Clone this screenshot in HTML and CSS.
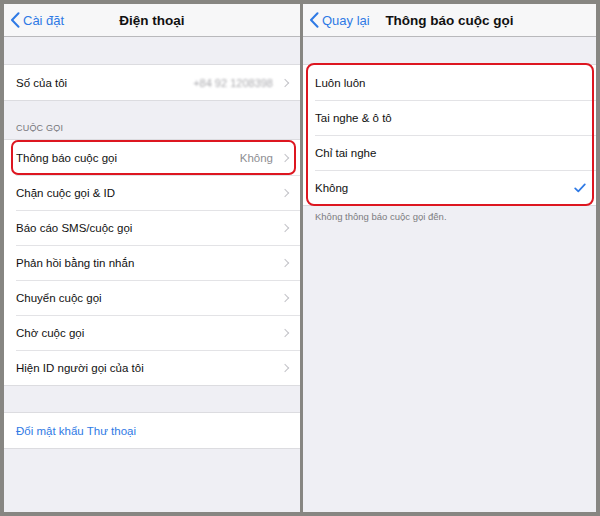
FILE: index.html
```html
<!DOCTYPE html>
<html lang="vi">
<head>
<meta charset="utf-8">
<link rel="stylesheet" href="styles.css">
</head>
<body>
<div class="frame">
  <section class="panel left">
    <header class="nav">
      <span class="back">
        <svg class="back-ico" viewBox="0 0 10 16" width="10" height="16"><path d="M8.5 1.2 L2 8 L8.5 14.8" fill="none" stroke="#2f7ae5" stroke-width="2" stroke-linecap="round" stroke-linejoin="round"/></svg>
        <span>Cài đặt</span>
      </span>
      <h1 class="title">Điện thoại</h1>
    </header>

    <div class="spacer"></div>
    <ul class="group">
      <li class="row"><span class="label">Số của tôi</span><span class="value blur">+84 92 1208398</span><span class="chev"></span></li>
    </ul>

    <div class="section-head">CUỘC GỌI</div>
    <ul class="group">
      <li class="row marked-left"><span class="label">Thông báo cuộc gọi</span><span class="value">Không</span><span class="chev"></span></li>
      <li class="row"><span class="label">Chặn cuộc gọi &amp; ID</span><span class="chev"></span></li>
      <li class="row"><span class="label">Báo cáo SMS/cuộc gọi</span><span class="chev"></span></li>
      <li class="row"><span class="label">Phản hồi bằng tin nhắn</span><span class="chev"></span></li>
      <li class="row"><span class="label">Chuyển cuộc gọi</span><span class="chev"></span></li>
      <li class="row"><span class="label">Chờ cuộc gọi</span><span class="chev"></span></li>
      <li class="row"><span class="label">Hiện ID người gọi của tôi</span><span class="chev"></span></li>
    </ul>

    <div class="spacer"></div>
    <ul class="group">
      <li class="row"><span class="label link">Đổi mật khẩu Thư thoại</span></li>
    </ul>
  </section>

  <section class="panel right">
    <header class="nav">
      <span class="back">
        <svg class="back-ico" viewBox="0 0 10 16" width="10" height="16"><path d="M8.5 1.2 L2 8 L8.5 14.8" fill="none" stroke="#2f7ae5" stroke-width="2" stroke-linecap="round" stroke-linejoin="round"/></svg>
        <span>Quay lại</span>
      </span>
      <h1 class="title">Thông báo cuộc gọi</h1>
    </header>

    <div class="spacer"></div>
    <ul class="group marked-right">
      <li class="row"><span class="label">Luôn luôn</span></li>
      <li class="row"><span class="label">Tai nghe &amp; ô tô</span></li>
      <li class="row"><span class="label">Chỉ tai nghe</span></li>
      <li class="row"><span class="label">Không</span>
        <svg class="check" viewBox="0 0 12 10" width="12" height="10"><path d="M1.2 5.4 L4.3 8.4 L10.8 1.4" fill="none" stroke="#2f7ae5" stroke-width="1.7" stroke-linecap="round" stroke-linejoin="round"/></svg>
      </li>
    </ul>
    <p class="footnote">Không thông báo cuộc gọi đến.</p>
  </section>
</div>
</body>
</html>
```

FILE: styles.css
```css
* { box-sizing: border-box; }

html, body {
  margin: 0;
  padding: 0;
  background: #878682;
}

body {
  font-family: "Liberation Sans", Arial, sans-serif;
  color: #111;
}

.frame {
  display: flex;
  gap: 3px;
  padding: 4px;
  width: 600px;
  height: 516px;
}

.panel {
  background: #efeff4;
  height: 508px;
  display: flex;
  flex-direction: column;
}

.panel.left { width: 296px; }
.panel.right { width: 293px; }

.nav {
  position: relative;
  height: 33px;
  background: #f7f7f8;
  border-bottom: 1px solid #b9b9bc;
  display: flex;
  align-items: center;
  justify-content: center;
}

.back {
  position: absolute;
  left: 6px;
  top: 0;
  height: 32px;
  display: flex;
  align-items: center;
  gap: 3px;
  color: #2f7ae5;
  font-size: 13px;
}

.back-ico { display: block; }

.title {
  margin: 0;
  font-size: 13.5px;
  font-weight: bold;
  color: #111;
}

.spacer { height: 28px; }

.group {
  list-style: none;
  margin: 0;
  padding: 0;
  background: #fff;
  box-shadow: 0 -1px 0 #dcdce0, 0 1px 0 #dcdce0;
}

.row {
  position: relative;
  height: 35px;
  display: flex;
  align-items: center;
  padding: 0 12px;
  font-size: 11.5px;
}

.row + .row::before {
  content: "";
  position: absolute;
  left: 12px;
  right: 0;
  top: 0;
  border-top: 1px solid #e3e3e6;
}

.label { flex: 1; }

.link { color: #2f7ae5; }

.value {
  color: #8e8e93;
  margin-right: 9px;
}

.value.blur {
  color: #a9a9ad;
  filter: blur(1.3px);
  font-size: 11px;
}

.chev {
  width: 6px;
  height: 6px;
  border-top: 1.3px solid #c3c3c8;
  border-right: 1.3px solid #c3c3c8;
  transform: rotate(45deg);
  margin-right: 0;
}

.section-head {
  height: 40px;
  padding: 0 12px 7px;
  display: flex;
  align-items: flex-end;
  font-size: 9px;
  color: #76767b;
  letter-spacing: 0.2px;
}

.check { margin-right: -2px; }

.footnote {
  margin: 6px 0 0;
  padding: 0 12px;
  font-size: 9.5px;
  color: #7c7c80;
}

/* red annotation frames */
.marked-left::after {
  content: "";
  position: absolute;
  left: 7px;
  right: 4px;
  top: 0;
  bottom: 0;
  border: 2px solid #dd1620;
  border-radius: 7px;
  pointer-events: none;
}

.marked-right { position: relative; }

.marked-right::after {
  content: "";
  position: absolute;
  left: 3px;
  right: 2px;
  top: -2px;
  bottom: -1px;
  border: 2px solid #dd1620;
  border-radius: 8px;
  pointer-events: none;
}
```
